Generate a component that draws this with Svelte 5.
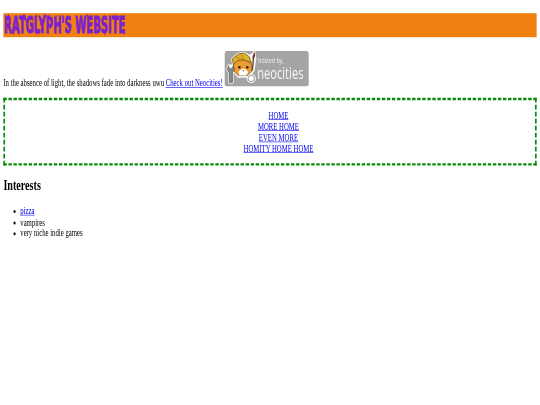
<script>
  const nav = ['HOME', 'MORE HOME', 'EVEN MORE', 'HOMITY HOME HOME'];
</script>

<svg class="defs" width="0" height="0" aria-hidden="true">
  <filter id="drip" x="-5%" y="-20%" width="110%" height="140%">
    <feTurbulence type="fractalNoise" baseFrequency="0.1 0.035" numOctaves="2" seed="4" result="n" />
    <feDisplacementMap in="SourceGraphic" in2="n" scale="5" xChannelSelector="R" yChannelSelector="G" />
  </filter>
</svg>

<div class="stage">
  <div class="page">
    <header class="banner"><h1>RATGLYPH'S WEBSITE</h1></header>

    <p class="intro">
      In the absence of light, the shadows fade into darkness uwu
      <a href="#neocities">Check out Neocities!</a>
      <svg class="badge" viewBox="0 0 85 36" width="200" height="59" preserveAspectRatio="none" role="img" aria-label="Hosted by Neocities">
        <rect width="85" height="36" rx="3" fill="#a4a4a4" />
        <g stroke="#f6f6f6" stroke-width="2.400" stroke-linejoin="round" fill="#f6f6f6">
          <path d="M9 14 L8 8 L14 3 L20 2 L25 5 L29 3 L28 13 L29 20 L24 26 L14 26 L9 20Z" />
          <path d="M4 15 L3 19 L5 22 L5 32 L8 32 L8 22 L10 19 L9 15Z" />
          <path d="M30 1 L31 8 L29 20 L27 20 L28 4Z" />
          <circle cx="27" cy="28" r="3.500" />
        </g>
        <path d="M9 14 L8 8 L14 3 L20 2 L25 6 L27 12 L19 9 L13 10Z" fill="#e2b321" stroke="#5c4a14" stroke-width=".7" />
        <path d="M11 6 L16 8 M17 3 L19 9" stroke="#8a6d16" stroke-width=".6" />
        <path d="M9 14 L13 10 L19 9 L27 12 L28 20 L23 25 L14 25 L9 20Z" fill="#ea9b32" stroke="#744814" stroke-width=".7" />
        <path d="M14 21 Q19 15 24 21 L22 25 L15 25Z" fill="#fff" />
        <circle cx="15" cy="16.500" r="1.300" fill="#222" />
        <circle cx="23" cy="16.500" r="1.300" fill="#222" />
        <path d="M18 19.500 h2 l-1 1.500z" fill="#a8332a" />
        <path d="M4 15 L3 19 L5 22 L5 32 L8 32 L8 22 L10 19 L9 15 L8 18 L5 18Z" fill="#8a8a8a" stroke="#444" stroke-width=".6" />
        <path d="M29.500 5 L28 20" stroke="#6e4a2a" stroke-width="1.400" />
        <path d="M30 0.500 L31 4 L29.500 8 L28 7Z" fill="#7b2d20" />
        <circle cx="27" cy="28" r="3.200" fill="#fff" stroke="#555" stroke-width=".6" />
        <text transform="translate(34 12.500) scale(0.66 1)" class="hosted">hosted by,</text>
        <text transform="translate(33 28) scale(0.66 1)" class="neo">neocities</text>
      </svg>
    </p>

    <ul class="box">
      {#each nav as item}
        <li><a href="#home">{item}</a></li>
      {/each}
    </ul>

    <h2>Interests</h2>
    <ul class="list">
      <li><a href="#pizza">pizza</a></li>
      <li>vampires</li>
      <li>very niche indie games</li>
    </ul>
  </div>
</div>

<style>
  :global(body) {
    margin: 0;
    background: #fff;
    overflow: hidden;
  }
  .defs {
    position: absolute;
  }
  .stage {
    width: 540px;
    height: 405px;
    overflow: hidden;
  }
  .page {
    width: 1280px;
    height: 675px;
    box-sizing: border-box;
    padding: 21.7px 8px 0;
    font-family: "Liberation Serif", serif;
    font-size: 16px;
    line-height: 18.4px;
    color: #000;
    transform: scale(0.4219, 0.6);
    transform-origin: 0 0;
    filter: blur(0.55px);
  }
  a {
    color: #00e;
    text-decoration: underline;
  }
  .banner {
    background: #f0800f;
    height: 40px;
    display: flex;
    align-items: center;
  }
  h1 {
    margin: 0 0 0 2px;
    font-family: "DejaVu Sans", sans-serif;
    font-size: 38px;
    font-weight: 700;
    line-height: 40px;
    color: #7a22cf;
    -webkit-text-stroke: 2px #7a22cf;
    transform: scaleX(0.625);
    transform-origin: 0 50%;
    filter: url(#drip);
    white-space: nowrap;
  }
  .intro {
    margin: 23.300px 0 0;
    white-space: nowrap;
  }
  .badge {
    vertical-align: baseline;
  }
  .hosted {
    font-family: "Open Sans", sans-serif;
    font-size: 8px;
    fill: #efefef;
  }
  .neo {
    font-family: "Open Sans", sans-serif;
    font-size: 17px;
    fill: #f8f8f8;
  }
  .box {
    margin: 15px 0 0;
    height: 113px;
    box-sizing: border-box;
    border: 4px dashed #0a8a0a;
    padding: 1.500px 0 0 40px;
    list-style: none;
    display: flex;
    flex-direction: column;
    align-items: center;
    justify-content: center;
  }
  h2 {
    margin: 19px 0 0;
    font-size: 24px;
    line-height: 28px;
    font-weight: 700;
    color: #000;
  }
  .list {
    margin: 20px 0 0;
    padding-left: 40px;
  }
</style>
